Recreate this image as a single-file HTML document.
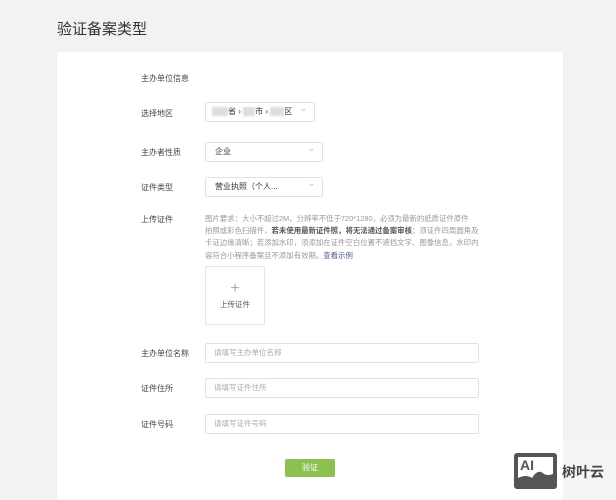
<!DOCTYPE html><html><head><meta charset="utf-8"><style>
body{margin:0;width:616px;height:500px;background:#f2f2f2;font-family:"Liberation Sans","Noto Sans CJK SC",sans-serif;position:relative;overflow:hidden;color:#333}
.a{position:absolute}
.t{font-size:8px;color:#444}
.sel{position:absolute;background:#fff;border:1px solid #e2e2e2;border-radius:2px;font-size:8px;line-height:18px;padding-left:9px;box-sizing:border-box;height:20px}
.sel:after{content:"⌄";position:absolute;right:7px;top:-4px;color:#bbb;font-size:9px}
.inp{position:absolute;left:205px;width:274px;height:20px;border:1px solid #e2e2e2;border-radius:2px;box-sizing:border-box;font-size:7.5px;color:#aaa;line-height:18px;padding-left:8px;background:#fff}
.blur{display:inline-block;width:16px;height:9px;background:#ddd;vertical-align:middle;filter:blur(1px)}
</style></head><body>
<div class="a" style="left:57px;top:18px;font-size:15px;color:#333">验证备案类型</div>
<div class="a" style="left:57px;top:52px;width:506px;height:448px;background:#fff"></div>
<div class="a t" style="left:141px;top:73px">主办单位信息</div>
<div class="a t" style="left:141px;top:108px">选择地区</div>
<div class="sel" style="left:205px;top:102px;width:110px;padding-left:6px"><span class="blur"></span>省 › <span class="blur" style="width:12px"></span>市 › <span class="blur" style="width:14px"></span>区</div>
<div class="a t" style="left:141px;top:147px">主办者性质</div>
<div class="sel" style="left:205px;top:142px;width:118px">企业</div>
<div class="a t" style="left:141px;top:182px">证件类型</div>
<div class="sel" style="left:205px;top:177px;width:118px">营业执照（个人...</div>
<div class="a t" style="left:141px;top:214px">上传证件</div>
<div class="a" style="left:205px;top:213px;white-space:nowrap;font-size:7.4px;line-height:12.2px;color:#999">图片要求：大小不超过2M，分辨率不低于720*1280，必须为最新的纸质证件原件<br>拍照或彩色扫描件，<b style="color:#555">若未使用最新证件照，将无法通过备案审核</b>；须证件四周圆角及<br>卡证边缘清晰；若添加水印，须添加在证件空白位置不遮挡文字、图像信息，水印内<br>容符合小程序备案且不添加有效期。<span style="color:#4a5a8a">查看示例</span></div>
<div class="a" style="left:205px;top:266px;width:60px;height:59px;border:1px solid #e6e6e6;box-sizing:border-box;text-align:center;font-size:7.5px;color:#555"><div style="font-size:16px;color:#aaa;line-height:16px;margin-top:14px;font-weight:100">+</div><div style="margin-top:2px">上传证件</div></div>
<div class="a t" style="left:141px;top:348px">主办单位名称</div>
<div class="inp" style="top:343px">请填写主办单位名称</div>
<div class="a t" style="left:141px;top:383px">证件住所</div>
<div class="inp" style="top:378px">请填写证件住所</div>
<div class="a t" style="left:141px;top:419px">证件号码</div>
<div class="inp" style="top:414px">请填写证件号码</div>
<div class="a" style="left:285px;top:459px;width:50px;height:18px;background:#8cc152;border-radius:2px;color:#fff;font-size:8px;text-align:center;line-height:18px">验证</div>
<div class="a" style="left:563px;top:440px;width:53px;height:60px;background:#f5f5f5"></div>
<div class="a" style="left:514px;top:453px;width:43px;height:36px;background:#555;border-radius:3px"></div>
<div class="a" style="left:518px;top:457px;width:35px;height:24px;background:#fff"></div>
<div class="a" style="left:520px;top:457px;font:bold 14px/16px 'Liberation Sans';color:#555">AI</div>
<svg class="a" style="left:518px;top:466px" width="35" height="16"><path d="M0 16 L0 12 Q8 8 14 12 Q20 2 26 8 Q30 10 35 8 L35 16Z" fill="#555"/></svg>
<div class="a" style="left:562px;top:462px;font-size:14px;font-weight:bold;color:#444">树叶云</div>
</body></html>
